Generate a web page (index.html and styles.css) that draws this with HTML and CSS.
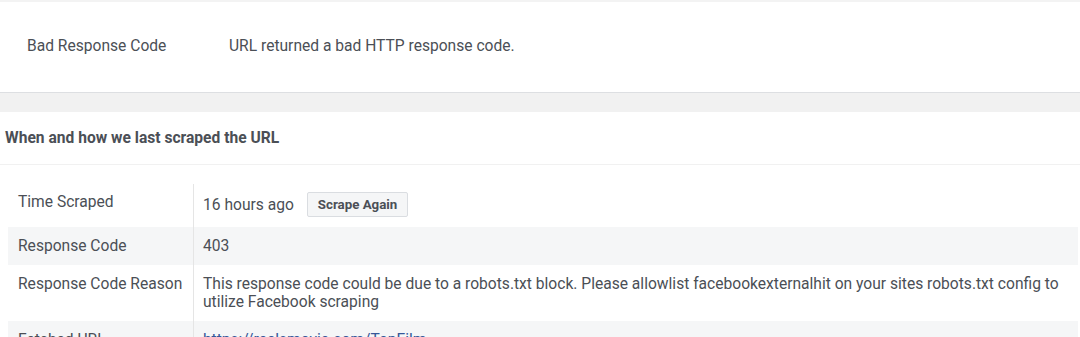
FILE: index.html
```html
<!DOCTYPE html>
<html>
<head>
<meta charset="utf-8">
<link rel="stylesheet" href="styles.css">
</head>
<body>
<div class="issue">
  <div class="issue-label">Bad Response Code</div>
  <div class="issue-text">URL returned a bad HTTP response code.</div>
</div>
<div class="band"></div>
<div class="card">
  <div class="card-header">When and how we last scraped the URL</div>
  <div class="card-body">
    <div class="table">
      <div class="row first">
        <div class="cell key">Time Scraped</div>
        <div class="cell val val-flex"><span>16 hours ago</span><button class="btn">Scrape Again</button></div>
      </div>
      <div class="row alt">
        <div class="cell key">Response Code</div>
        <div class="cell val">403</div>
      </div>
      <div class="row">
        <div class="cell key">Response Code Reason</div>
        <div class="cell val">This response code could be due to a robots.txt block. Please allowlist facebookexternalhit on your sites robots.txt config to utilize Facebook scraping</div>
      </div>
      <div class="row alt">
        <div class="cell key">Fetched URL</div>
        <div class="cell val"><a class="link" href="#">https://reelsmovie.com/TopFilm</a></div>
      </div>
    </div>
  </div>
</div>
</body>
</html>
```
FILE: styles.css
```css
html, body {
  margin: 0;
  padding: 0;
  background: #fff;
  font-family: Roboto, "Liberation Sans", sans-serif;
  color: #4b4f56;
}
.issue {
  display: flex;
  align-items: center;
  height: 90px;
  border-top: 2px solid #f3f3f3;
  border-bottom: 1px solid #dddfe2;
  font-size: 15.6px;
  color: #4b4f56;
}
.issue-label {
  padding-left: 27px;
  width: 229px;
  box-sizing: border-box;
  padding-bottom: 2px;
}
.issue-text {
  padding-bottom: 2px;
}
.band {
  height: 19px;
  background: #f1f1f1;
}
.card {
  background: #fff;
}
.card-header {
  height: 53px;
  box-sizing: border-box;
  display: flex;
  align-items: center;
  padding-left: 5px;
  font-size: 15.6px;
  font-weight: 700;
  border-bottom: 1px solid #f1f1f1;
}
.card-body {
  padding: 19px 2px 0 8px;
}
.table {
  display: flex;
  flex-direction: column;
}
.row {
  display: grid;
  grid-template-columns: 186px 1fr;
  font-size: 15.6px;
  line-height: 18px;
}
.row.alt {
  background: #f5f6f7;
}
.cell {
  padding: 10px 10px 10px 10px;
}
.key {
  border-right: 1px solid #e5e5e5;
}
.val {
  padding-left: 9px;
}
.row.first .cell {
  padding-top: 8px;
  padding-bottom: 10px;
}
.row.first .key {
  padding-top: 9px;
}
.val-flex {
  display: flex;
  align-items: center;
  gap: 13px;
}
.val-flex span {
  line-height: 18px;
  padding-top: 1px;
}
.btn {
  height: 25px;
  padding: 0 10px;
  border: 1px solid #dadde1;
  background: #f5f6f7;
  border-radius: 2px;
  font-family: Roboto, "Liberation Sans", sans-serif;
  font-size: 13.3px;
  font-weight: 700;
  color: #4b4f56;
}
.link {
  color: #365899;
  text-decoration: none;
}
```
